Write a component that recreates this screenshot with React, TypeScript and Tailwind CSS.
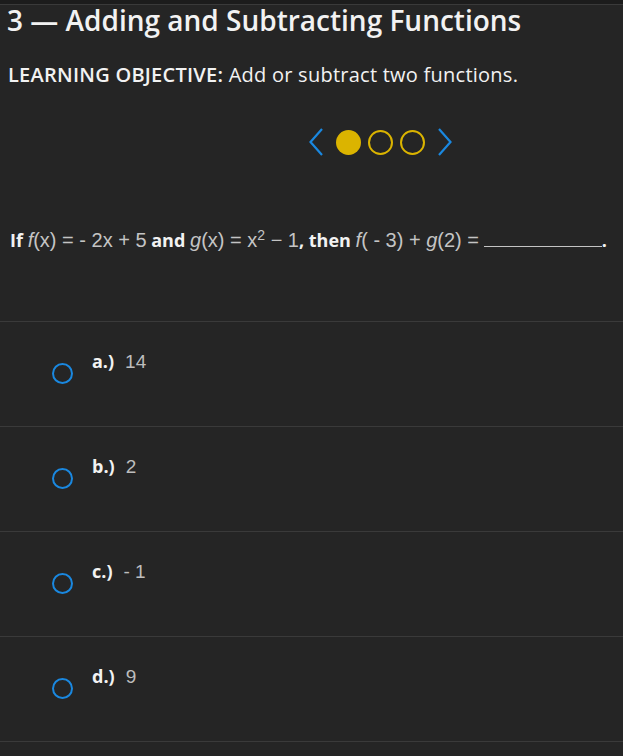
import React from "react";

const F = "'Open Sans', sans-serif";
const M = "'Liberation Sans', sans-serif";

const Radio = () => (
  <div className="w-[21px] h-[21px] rounded-full border-[2px] border-[#1a88e0] shrink-0" />
);

const Option = ({ label, value }: { label: string; value: string }) => (
  <div className="h-[105px] border-b border-[#3a3a3a] flex items-start pl-[52px]">
    <div className="mt-[41px]">
      <Radio />
    </div>
    <div className="ml-[19px] mt-[26px] flex items-baseline gap-[11px]">
      <span className="text-[18px] font-bold text-[#f2f2f2]" style={{ fontFamily: F }}>{label}</span>
      <span className="text-[19px] text-[#bdbdbd]" style={{ fontFamily: M }}>{value}</span>
    </div>
  </div>
);

export default function App() {
  const m = "text-[#c4c4c4] text-[20px] font-normal";
  return (
    <div className="w-[623px] h-[756px] bg-[#252525] overflow-hidden" style={{ fontFamily: F }}>
      <div className="h-[5px] bg-[#1c1c1c] border-b border-[#3a3a3a]" />
      <h1 className="px-[7px] text-[28px] font-semibold text-[#f2f2f2] leading-[30px]">3 — Adding and Subtracting Functions</h1>
      <p className="px-[8px] mt-[28px] text-[20px] text-[#f2f2f2] leading-[24px] tracking-[0.25px]">
        <span className="font-semibold">LEARNING OBJECTIVE:</span> Add or subtract two functions.
      </p>
      <div className="flex items-center mt-[41px] pl-[309px]">
        <svg width="14" height="28" viewBox="0 0 14 28">
          <path d="M13 1 L1.5 14 L13 27" stroke="#1a88e0" strokeWidth="2.2" fill="none" />
        </svg>
        <div className="ml-[13px] w-[25px] h-[25px] rounded-full bg-[#dbb400]" />
        <div className="ml-[7px] w-[25px] h-[25px] rounded-full border-[2px] border-[#dbb400]" />
        <div className="ml-[7px] w-[25px] h-[25px] rounded-full border-[2px] border-[#dbb400]" />
        <svg width="14" height="28" viewBox="0 0 14 28" className="ml-[13px]">
          <path d="M1 1 L12.5 14 L1 27" stroke="#1a88e0" strokeWidth="2.2" fill="none" />
        </svg>
      </div>
      <div className="px-[10px] mt-[69px] h-[97px] border-b border-[#3a3a3a] flex items-start">
        <p className="text-[18px] text-[#f2f2f2] font-bold whitespace-nowrap">
          If{" "}
          <span className={m} style={{ fontFamily: M }}>
            <i>f</i>(x) = - 2x + 5
          </span>{" "}
          and{" "}
          <span className={m} style={{ fontFamily: M }}>
            <i>g</i>(x) = x<sup className="text-[14px]">2</sup> − 1
          </span>
          , then{" "}
          <span className={m} style={{ fontFamily: M }}>
            <i>f</i>( - 3) + <i>g</i>(2) =
          </span>{" "}
          <span className="inline-block w-[118px] border-b border-[#c4c4c4] align-baseline" />.
        </p>
      </div>
      <Option label="a.)" value="14" />
      <Option label="b.)" value="2" />
      <Option label="c.)" value="- 1" />
      <Option label="d.)" value="9" />
    </div>
  );
}
